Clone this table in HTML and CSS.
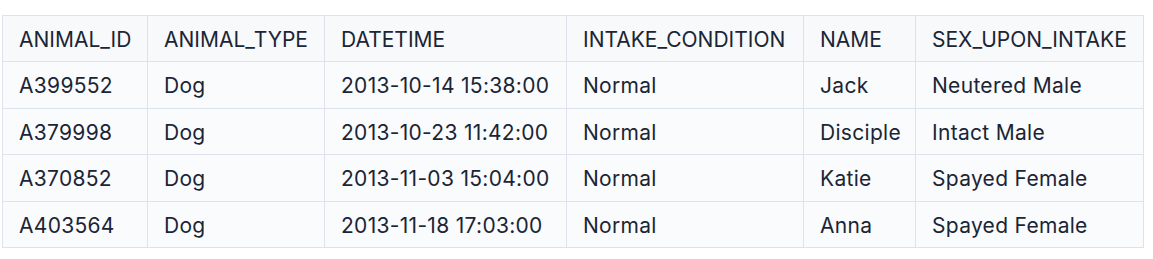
FILE: index.html
```html
<!DOCTYPE html>
<html>
<head>
<meta charset="utf-8">
<link rel="stylesheet" href="styles.css">
</head>
<body>
<div class="wrap">
<table class="data">
<colgroup>
<col class="c1"><col class="c2"><col class="c3"><col class="c4"><col class="c5"><col class="c6">
</colgroup>
<thead>
<tr><th>ANIMAL_ID</th><th>ANIMAL_TYPE</th><th>DATETIME</th><th>INTAKE_CONDITION</th><th>NAME</th><th>SEX_UPON_INTAKE</th></tr>
</thead>
<tbody>
<tr><td>A399552</td><td>Dog</td><td>2013-10-14 15:38:00</td><td>Normal</td><td>Jack</td><td>Neutered Male</td></tr>
<tr><td>A379998</td><td>Dog</td><td>2013-10-23 11:42:00</td><td>Normal</td><td>Disciple</td><td>Intact Male</td></tr>
<tr><td>A370852</td><td>Dog</td><td>2013-11-03 15:04:00</td><td>Normal</td><td>Katie</td><td>Spayed Female</td></tr>
<tr><td>A403564</td><td>Dog</td><td>2013-11-18 17:03:00</td><td>Normal</td><td>Anna</td><td>Spayed Female</td></tr>
</tbody>
</table>
</div>
</body>
</html>
```
FILE: styles.css
```css
html, body {
  margin: 0;
  padding: 0;
  background: #ffffff;
}
.wrap {
  padding: 15px 10px 0 2px;
}
.data {
  border-collapse: collapse;
  table-layout: fixed;
  width: 1141px;
  font-family: Inter, "Noto Sans", sans-serif;
  font-size: 21px;
  color: #1a2535;
  background: #fafbfd;
}
.c1 { width: 145px; }
.c2 { width: 177px; }
.c3 { width: 242px; }
.c4 { width: 237px; }
.c5 { width: 112px; }
.c6 { width: 228px; }
.data th, .data td {
  border: 1px solid #dce3ec;
  padding: 9px 16px 7px;
  line-height: 29.4px;
  text-align: left;
  font-weight: 400;
  white-space: nowrap;
}
.data td {
  letter-spacing: 0.3px;
}
.data th {
  background: #f8f9fb;
}
```
